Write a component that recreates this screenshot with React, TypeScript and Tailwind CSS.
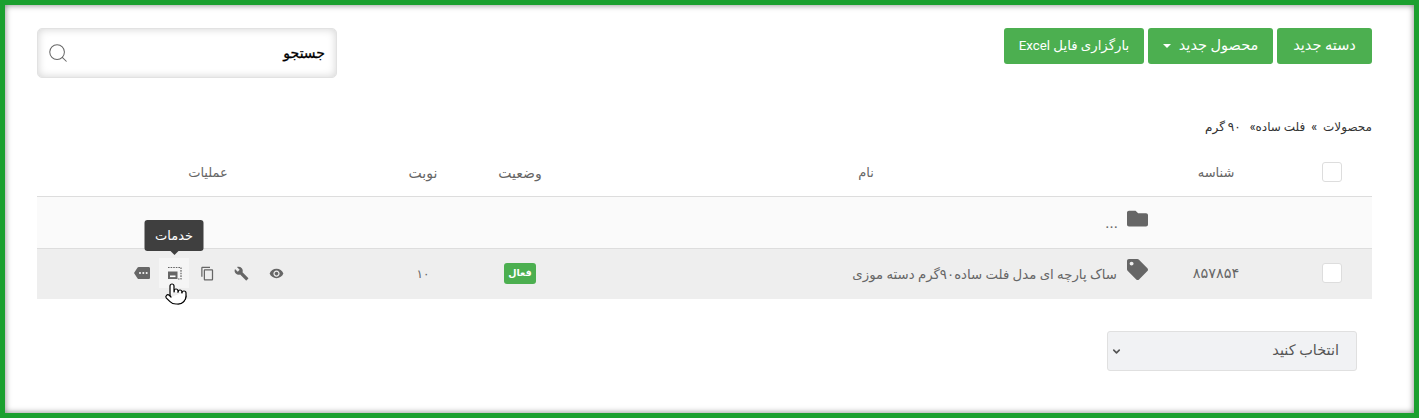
import React from 'react';
import { FaFolder, FaTag } from 'react-icons/fa';
import { MdVisibility, MdBuild, MdContentCopy, MdMore } from 'react-icons/md';
import { Search, ChevronDown, Pointer } from 'lucide-react';

const rowGrid = 'grid grid-cols-[99px_114px_586px_106px_88px_342px] items-center';

const Checkbox = () => (
  <div className="flex justify-start pr-[30px] pb-[2px]">
    <div className="w-5 h-5 bg-white border border-[#dddddd] rounded-[3px]" />
  </div>
);

// image inside a dashed frame
const ServicesIcon = () => (
  <svg width="15" height="14" viewBox="0 0 15 14" className="text-[#666666]">
    <path d="M1 1.5H14V13H11" fill="none" stroke="currentColor" strokeWidth="1.2" strokeDasharray="1.6 1" />
    <rect x="1" y="5.5" width="9.5" height="7.5" fill="currentColor" />
    <rect x="3" y="9.5" width="5.5" height="1.6" fill="#ffffff" />
  </svg>
);

const App = () => {
  return (
    <div dir="rtl" className="relative h-[418px] border-[5px] border-[#1ba02f] bg-white pt-[23px] pr-[42px] pl-[32px] font-[Roboto,'DejaVu_Sans',sans-serif] text-[#666666] shadow-[inset_0_0_6px_rgba(0,0,0,0.5)]">
      <div className="flex justify-between items-start">
        <div className="flex gap-1">
          <button className="h-9 w-[95px] bg-[#4caf50] text-white text-[14.5px] rounded-[3px]">دسته جدید</button>
          <button className="h-9 w-[125px] bg-[#4caf50] text-white text-[14.5px] rounded-[3px] flex items-center justify-center gap-2">
            محصول جدید
            <span className="w-0 h-0 border-x-[4px] border-x-transparent border-t-[4px] border-t-white" />
          </button>
          <button className="h-9 w-[140px] bg-[#4caf50] text-white text-[13.3px] rounded-[3px]">بارگزاری فایل Excel</button>
        </div>
        <div className="h-[50px] w-[300px] flex items-center justify-between pr-[11px] pl-[9px] bg-white border border-[#e2e2e2] rounded-[5px] shadow-[inset_0_0_8px_rgba(0,0,0,0.18)]">
          <span className="text-[14px] text-black [-webkit-text-stroke:0.3px_black]">جستجو</span>
          <Search size={22} strokeWidth={1.1} className="text-[#666666]" />
        </div>
      </div>

      <div className="mt-[40px] text-[12px] leading-[18px] text-[#333333] font-medium">
        محصولات&nbsp; »&nbsp; فلت ساده»&nbsp;&nbsp; ۹۰ گرم
      </div>

      <div className="mt-[14px]">
        <div className={`${rowGrid} h-[47px] border-b border-[#dddddd] text-[14px]`}>
          <Checkbox />
          <div className="text-center text-[13px]">شناسه</div>
          <div className="text-center text-[13px]">نام</div>
          <div className="text-center">وضعیت</div>
          <div className="text-center">نوبت</div>
          <div className="text-center text-[13px]">عملیات</div>
        </div>

        <div className={`${rowGrid} h-[52px] bg-[#fafafa] border-b border-[#dddddd]`}>
          <div />
          <div />
          <div className="flex items-start gap-[9px] pr-[11px] text-[16px]">
            <FaFolder size={21} className="text-[#666666] -mt-1" />
            <span className="leading-[22px]">...</span>
          </div>
          <div />
          <div />
          <div />
        </div>

        <div className={`${rowGrid} h-[50px] bg-[#eeeeee]`}>
          <Checkbox />
          <div className="text-center text-[14.5px]">۸۵۷۸۵۴</div>
          <div className="flex items-start gap-[10px] pr-[11px]">
            <FaTag size={21} className="text-[#666666] -mt-1" />
            <span className="mt-0.5 text-[13.3px]">ساک پارچه ای مدل فلت ساده۹۰گرم دسته موزی</span>
          </div>
          <div className="flex justify-center pb-[2px]">
            <span className="h-[21px] w-[32px] flex items-center justify-center bg-[#4caf50] text-white text-[9.5px] font-bold rounded-[3px]">فعال</span>
          </div>
          <div className="text-center text-[12px] tracking-[-1px]">۱۰</div>
          <div className="flex items-center pr-[86px] pb-[2px] text-[#666666]">
            <span className="w-[34px] flex justify-center"><MdVisibility size={15} /></span>
            <span className="w-[35px] flex justify-center"><MdBuild size={15} /></span>
            <span className="w-[33px] flex justify-center"><MdContentCopy size={15} /></span>
            <span className="relative w-[30px] h-[30px] mx-[2px] flex items-center justify-center bg-[#f5f5f5]">
              <ServicesIcon />
              {/* tooltip */}
              <span className="absolute bottom-[37px] left-1/2 -translate-x-1/2 w-[59px] h-[31px] flex items-center justify-center bg-[#3f3f3f] text-white text-[13px] rounded-[3px]">
                خدمات
                <span className="absolute top-full left-1/2 -translate-x-1/2 w-0 h-0 border-x-[4px] border-x-transparent border-t-[4px] border-t-[#3f3f3f]" />
              </span>
              {/* mouse cursor */}
              <Pointer size={24} strokeWidth={1.2} fill="#ffffff" className="absolute top-[24px] left-[5px] text-black" />
            </span>
            <span className="w-[31px] flex justify-center"><MdMore size={16} /></span>
          </div>
        </div>
      </div>

      <div className="mt-[32px] mr-[15px] w-[250px] h-[40px] flex items-center justify-between pr-[17px] pl-[3px] bg-[#f1f2f4] border border-[#e0e0e0] rounded-[3px] text-[14.5px] text-[#555555]">
        <span>انتخاب کنید</span>
        <ChevronDown size={11} strokeWidth={3.5} />
      </div>
    </div>
  );
};

export default App;
